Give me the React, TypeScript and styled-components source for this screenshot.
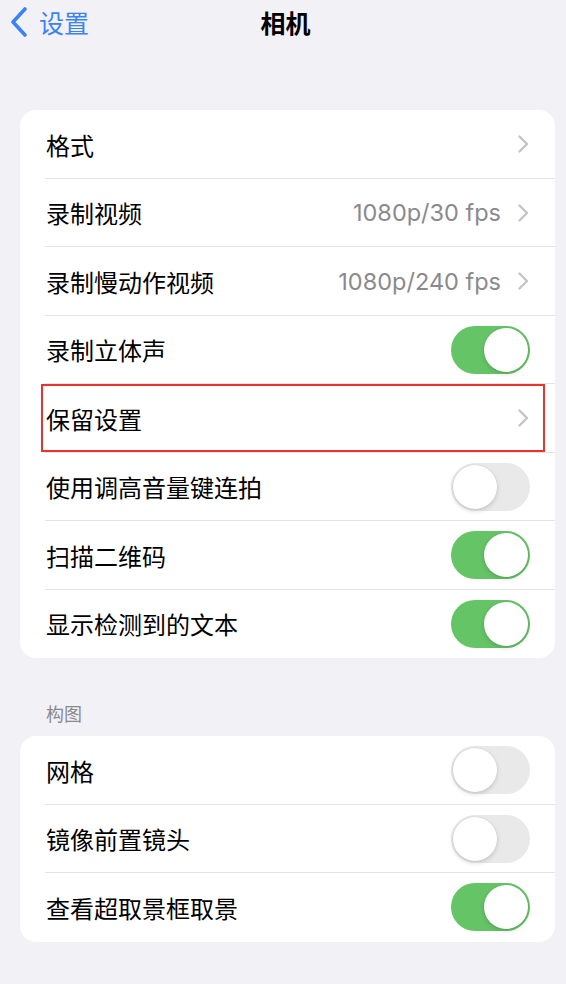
import * as React from 'react';
import styled, { createGlobalStyle } from 'styled-components';

const GlobalStyle = createGlobalStyle`
  html, body {
    margin: 0;
    padding: 0;
    background: #f2f1f6;
  }
  body {
    font-family: Inter, "Noto Sans CJK SC", sans-serif;
    -webkit-font-smoothing: antialiased;
  }
`;

const Page = styled.div`
  width: 566px;
  min-height: 984px;
  background: #f2f1f6;
  box-sizing: border-box;
  padding: 0 11px 40px 20px;
`;

const NavBar = styled.div`
  position: relative;
  height: 44px;
  display: flex;
  align-items: center;
  margin-left: -12px;
`;

const Back = styled.div`
  display: flex;
  align-items: center;
  gap: 11px;
  color: #3b82f6;
  font-size: 25px;
  svg {
    display: block;
  }
`;

const Title = styled.div`
  position: absolute;
  left: 0;
  right: 0;
  text-align: center;
  font-size: 25px;
  font-weight: 700;
  color: #000;
  pointer-events: none;
  padding-left: 8px;
`;

const Group = styled.div<{ $top: number }>`
  margin-top: ${p => p.$top}px;
  background: #fff;
  border-radius: 16px;
  overflow: hidden;
`;

const SectionHeader = styled.div`
  margin-top: 44px;
  padding-left: 26px;
  height: 34px;
  font-size: 18px;
  color: #8a8a8e;
  line-height: 26px;
`;

const Row = styled.div`
  position: relative;
  height: 68.5px;
  display: flex;
  align-items: center;
  padding-left: 26px;
  &:not(:last-child)::after {
    content: '';
    position: absolute;
    left: 25px;
    right: 0;
    bottom: 0;
    height: 1px;
    background: #e3e3e6;
  }
`;

const Label = styled.div`
  flex: 1;
  font-size: 24px;
  color: #000;
`;

const Value = styled.div`
  font-size: 23.5px;
  color: #8a8a8e;
  margin-right: 16px;
`;

const Chevron = styled.div`
  width: 12px;
  margin-right: 26px;
  display: flex;
  svg {
    display: block;
  }
`;

const Track = styled.div<{ $on: boolean }>`
  width: 79px;
  height: 48px;
  border-radius: 24px;
  margin-right: 25px;
  background: ${p => (p.$on ? '#65c466' : '#e9e9ea')};
  display: flex;
  align-items: center;
  justify-content: ${p => (p.$on ? 'flex-end' : 'flex-start')};
  padding: 2px;
  box-sizing: border-box;
`;

const Knob = styled.div`
  width: 44px;
  height: 44px;
  border-radius: 50%;
  background: #fff;
  box-shadow: 0 2px 5px rgba(0, 0, 0, 0.15), 0 0 0 0.5px rgba(0, 0, 0, 0.06);
`;

const Highlight = styled.div`
  position: absolute;
  left: 21px;
  right: 10px;
  top: 0;
  bottom: 1px;
  border: 2px solid #ea3330;
  pointer-events: none;
`;

type Item = {
  label: string;
  value?: string;
  toggle?: boolean;
  highlight?: boolean;
};

const camera: Item[] = [
  { label: '格式' },
  { label: '录制视频', value: '1080p/30 fps' },
  { label: '录制慢动作视频', value: '1080p/240 fps' },
  { label: '录制立体声', toggle: true },
  { label: '保留设置', highlight: true },
  { label: '使用调高音量键连拍', toggle: false },
  { label: '扫描二维码', toggle: true },
  { label: '显示检测到的文本', toggle: true },
];

const composition: Item[] = [
  { label: '网格', toggle: false },
  { label: '镜像前置镜头', toggle: false },
  { label: '查看超取景框取景', toggle: true },
];

function ChevronIcon() {
  return (
    <svg width="12" height="20" viewBox="0 0 12 20">
      <path d="M2.5 2.5 L10 10 L2.5 17.5" fill="none" stroke="#c4c4c7" strokeWidth="2.4" strokeLinecap="round" strokeLinejoin="round" />
    </svg>
  );
}

function SettingRow({ item }: { item: Item }) {
  return (
    <Row>
      <Label>{item.label}</Label>
      {item.value && <Value>{item.value}</Value>}
      {item.toggle === undefined ? (
        <Chevron>
          <ChevronIcon />
        </Chevron>
      ) : (
        <Track $on={item.toggle}>
          <Knob />
        </Track>
      )}
      {item.highlight && <Highlight />}
    </Row>
  );
}

export default function App() {
  return (
    <>
      <GlobalStyle />
      <Page>
        <NavBar>
          <Back>
            <svg width="20" height="32" viewBox="0 0 20 32">
              <path d="M17 3 L5 16 L17 29" fill="none" stroke="#3b82f6" strokeWidth="3.6" strokeLinecap="round" strokeLinejoin="round" />
            </svg>
            <span>设置</span>
          </Back>
          <Title>相机</Title>
        </NavBar>
        <Group $top={66}>
          {camera.map(i => (
            <SettingRow key={i.label} item={i} />
          ))}
        </Group>
        <SectionHeader>构图</SectionHeader>
        <Group $top={0}>
          {composition.map(i => (
            <SettingRow key={i.label} item={i} />
          ))}
        </Group>
      </Page>
    </>
  );
}
